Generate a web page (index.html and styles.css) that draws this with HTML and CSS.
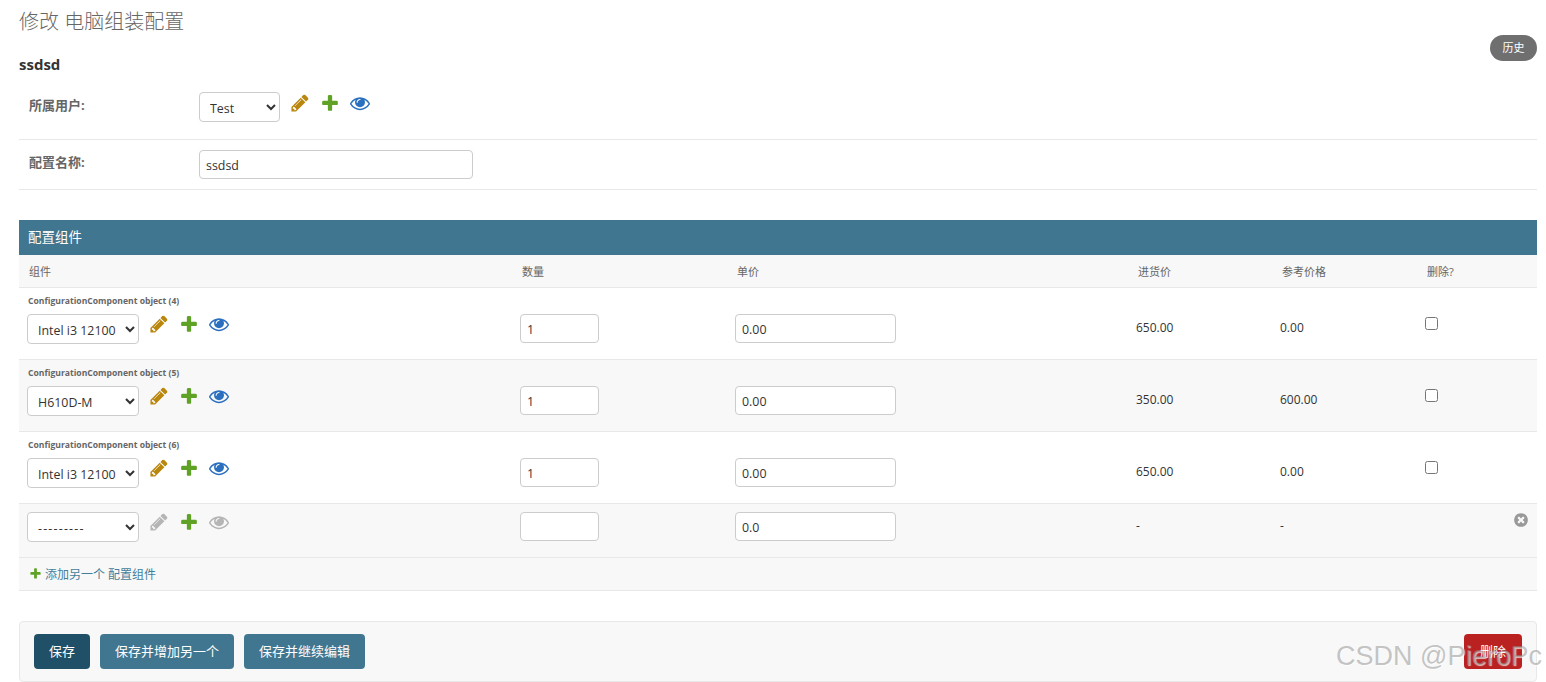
FILE: index.html
```html
<!DOCTYPE html>
<html lang="zh-CN">
<head>
<meta charset="utf-8">
<title>修改 电脑组装配置</title>
<link rel="stylesheet" href="styles.css">
</head>
<body>
<svg class="defs" width="0" height="0" aria-hidden="true">
  <symbol id="i-edit" viewBox="0 0 1792 1792"><path d="M491 1536l91-91-235-235-91 91v107h128v128h107zm523-928q0-22-22-22-10 0-17 7l-542 542q-7 7-7 17 0 22 22 22 10 0 17-7l542-542q7-7 7-17zm-54-192l416 416-832 832h-416v-416zm683 96q0 53-37 90l-166 166-416-416 166-165q36-38 90-38 53 0 91 38l235 234q37 39 37 91z"/></symbol>
  <symbol id="i-add" viewBox="0 0 1792 1792"><path d="M1600 796v192q0 40-28 68t-68 28h-416v416q0 40-28 68t-68 28h-192q-40 0-68-28t-28-68v-416h-416q-40 0-68-28t-28-68v-192q0-40 28-68t68-28h416v-416q0-40 28-68t68-28h192q40 0 68 28t28 68v416h416q40 0 68 28t28 68z"/></symbol>
  <symbol id="i-view" viewBox="0 0 1792 1792"><path d="M1664 960q-152-236-381-353 61 104 61 225 0 185-131.5 316.5t-316.5 131.5-316.5-131.5-131.5-316.5q0-121 61-225-229 117-381 353 133 205 333.5 326.5t434.5 121.5 434.5-121.5 333.5-326.5zm-720-384q0-20-14-34t-34-14q-125 0-214.5 89.5t-89.5 214.5q0 20 14 34t34 14 34-14 14-34q0-86 61-147t147-61q20 0 34-14t14-34zm848 384q0 34-20 69-140 230-376.5 368.5t-499.5 138.5-499.5-139-376.5-368q-20-35-20-69t20-69q140-229 376.5-368t499.5-139 499.5 139 376.5 368q20 35 20 69z"/></symbol>
  <symbol id="i-del" viewBox="0 0 1792 1792"><path d="M1277 1122q0-26-19-45l-181-181 181-181q19-19 19-45 0-27-19-46l-90-90q-19-19-46-19-26 0-45 19l-181 181-181-181q-19-19-45-19-27 0-46 19l-90 90q-19 19-19 46 0 26 19 45l181 181-181 181q-19 19-19 45 0 27 19 46l90 90q19 19 46 19 26 0 45-19l181-181 181 181q19 19 45 19 27 0 46-19l90-90q19-19 19-46zm387-226q0 209-103 385.5t-279.5 279.5-385.5 103-385.5-103-279.5-279.5-103-385.5 103-385.5 279.5-279.5 385.5-103 385.5 103 279.5 279.5 103 385.5z"/></symbol>
</svg>

<main class="content">
  <div class="title-row">
    <h1 class="page-title">修改 电脑组装配置</h1>
    <a class="history" href="#">历史</a>
  </div>
  <h2 class="object-name">ssdsd</h2>

  <section class="fields">
    <div class="form-row form-row-select">
      <label class="field-label">所属用户:</label>
      <div class="widget">
        <select class="control select-user"><option>Test</option></select>
        <div class="links">
          <svg class="icon edit"><use href="#i-edit"/></svg>
          <svg class="icon add"><use href="#i-add"/></svg>
          <svg class="icon view"><use href="#i-view"/></svg>
        </div>
      </div>
    </div>
    <div class="form-row">
      <label class="field-label">配置名称:</label>
      <input class="control input-name" type="text" value="ssdsd">
    </div>
  </section>

  <section class="inline-group">
    <h2 class="inline-title">配置组件</h2>
    <table class="grid">
      <colgroup>
        <col class="col-comp"><col class="col-qty"><col class="col-price"><col class="col-cost"><col class="col-ref"><col>
      </colgroup>
      <thead>
        <tr><th>组件</th><th>数量</th><th>单价</th><th>进货价</th><th>参考价格</th><th>删除?</th></tr>
      </thead>
      <tbody>
        <tr class="row">
          <td class="cell-comp">
            <div class="object-label">ConfigurationComponent object (4)</div>
            <div class="widget">
              <select class="control select-comp"><option>Intel i3 12100</option></select>
              <div class="links">
                <svg class="icon edit"><use href="#i-edit"/></svg>
                <svg class="icon add"><use href="#i-add"/></svg>
                <svg class="icon view"><use href="#i-view"/></svg>
              </div>
            </div>
          </td>
          <td class="cell-field"><input class="control input-qty" type="text" value="1"></td>
          <td class="cell-field"><input class="control input-price" type="text" value="0.00"></td>
          <td class="cell-num">650.00</td>
          <td class="cell-num">0.00</td>
          <td class="cell-check"><input class="check" type="checkbox"></td>
        </tr>
        <tr class="row alt">
          <td class="cell-comp">
            <div class="object-label">ConfigurationComponent object (5)</div>
            <div class="widget">
              <select class="control select-comp"><option>H610D-M</option></select>
              <div class="links">
                <svg class="icon edit"><use href="#i-edit"/></svg>
                <svg class="icon add"><use href="#i-add"/></svg>
                <svg class="icon view"><use href="#i-view"/></svg>
              </div>
            </div>
          </td>
          <td class="cell-field"><input class="control input-qty" type="text" value="1"></td>
          <td class="cell-field"><input class="control input-price" type="text" value="0.00"></td>
          <td class="cell-num">350.00</td>
          <td class="cell-num">600.00</td>
          <td class="cell-check"><input class="check" type="checkbox"></td>
        </tr>
        <tr class="row">
          <td class="cell-comp">
            <div class="object-label">ConfigurationComponent object (6)</div>
            <div class="widget">
              <select class="control select-comp"><option>Intel i3 12100</option></select>
              <div class="links">
                <svg class="icon edit"><use href="#i-edit"/></svg>
                <svg class="icon add"><use href="#i-add"/></svg>
                <svg class="icon view"><use href="#i-view"/></svg>
              </div>
            </div>
          </td>
          <td class="cell-field"><input class="control input-qty" type="text" value="1"></td>
          <td class="cell-field"><input class="control input-price" type="text" value="0.00"></td>
          <td class="cell-num">650.00</td>
          <td class="cell-num">0.00</td>
          <td class="cell-check"><input class="check" type="checkbox"></td>
        </tr>
        <tr class="row alt row-new">
          <td class="cell-comp">
            <div class="widget">
              <select class="control select-comp select-empty"><option>---------</option></select>
              <div class="links">
                <svg class="icon muted"><use href="#i-edit"/></svg>
                <svg class="icon add"><use href="#i-add"/></svg>
                <svg class="icon muted"><use href="#i-view"/></svg>
              </div>
            </div>
          </td>
          <td class="cell-field"><input class="control input-qty" type="text" value=""></td>
          <td class="cell-field"><input class="control input-price" type="text" value="0.0"></td>
          <td class="cell-num">-</td>
          <td class="cell-num">-</td>
          <td class="cell-remove"><svg class="remove"><use href="#i-del"/></svg></td>
        </tr>
      </tbody>
    </table>
    <div class="add-row">
      <svg class="add-icon"><use href="#i-add"/></svg>
      <a class="add-link" href="#">添加另一个 配置组件</a>
    </div>
  </section>

  <div class="submit-row">
    <a class="btn btn-default" href="#">保存</a>
    <a class="btn" href="#">保存并增加另一个</a>
    <a class="btn" href="#">保存并继续编辑</a>
    <a class="btn btn-delete" href="#">删除</a>
  </div>
</main>
<div class="watermark">CSDN @PieroPc</div>
</body>
</html>
```
FILE: styles.css
```css
* { box-sizing: border-box; }
html, body { margin: 0; height: 682px; overflow: hidden; }
body {
  position: relative;
  background: #fff;
  color: #333;
  font-family: "Open Sans", "Noto Sans CJK SC", sans-serif;
  font-size: 13px;
}
.defs { position: absolute; }
.content { padding: 0 9px 0 19px; }

.title-row { display: flex; justify-content: space-between; height: 61px; padding-top: 10px; }
.page-title { margin: 0; font-size: 20px; line-height: 24px; font-weight: 300; color: #666; }
.history {
  align-self: flex-end;
  width: 47px; height: 26px;
  border-radius: 13px;
  background: #6f6f6f;
  color: #fff;
  font-size: 11px;
  line-height: 26px;
  text-align: center;
  text-decoration: none;
}
.object-name { margin: -6px 0 0; height: 27px; font-size: 15px; line-height: 18px; font-weight: 700; color: #333; }

.fields { margin-bottom: 30px; }
.form-row { display: flex; align-items: flex-start; padding: 10px; border-bottom: 1px solid #e8e8e8; }
.form-row-select { padding-bottom: 17px; }
.form-row-select .field-label { padding-top: 1px; }
.field-label { width: 170px; font-size: 13px; line-height: 24px; font-weight: 700; color: #666; flex: none; }

.control {
  display: block;
  margin: 0;
  height: 30px;
  border: 1px solid #ccc;
  border-radius: 4px;
  background: #fff;
  color: #333;
  font-family: "Open Sans", "Noto Sans CJK SC", sans-serif;
  font-size: 12.4px;
}
input.control { height: 29px; padding: 1px 6px 0; }
select.control { padding: 2px 6px 0; }
.grid input.control { padding-top: 3px; }
.grid select.control { padding-top: 4px; }
.select-user { width: 81px; }
.select-comp { width: 112px; }
.select-empty { letter-spacing: 1.2px; }
.input-name { width: 274px; }
.input-qty { width: 79px; }
.input-price { width: 161px; }

.widget { display: flex; align-items: flex-start; }
.links { display: flex; gap: 10px; margin: 1px 0 0 10px; }
.grid .links { margin-top: 0; }
.icon { display: block; width: 20px; height: 20px; }
.edit { fill: #b9860e; }
.add { fill: #5fa225; }
.view { fill: #2b70bf; }
.muted { fill: #b5b5b5; }

.inline-title {
  margin: 0;
  height: 35px;
  padding: 0 9px;
  background: #417690;
  color: #fff;
  font-size: 13.5px;
  line-height: 35px;
  font-weight: 400;
}
.grid { width: 100%; table-layout: fixed; border-collapse: collapse; }
.col-comp { width: 493px; }
.col-qty { width: 215px; }
.col-price { width: 401px; }
.col-cost { width: 144px; }
.col-ref { width: 145px; }
.grid th {
  height: 32px;
  padding: 0 10px;
  background: #f8f8f8;
  border-bottom: 1px solid #e8e8e8;
  color: #666;
  font-size: 11px;
  font-weight: 400;
  text-align: left;
}
.grid td { padding: 0 8px; vertical-align: top; border-bottom: 1px solid #e8e8e8; }
.row { height: 72px; }
.row.alt { background: #f8f8f8; }
.row-new { height: 54px; }
.object-label { margin: 7px 0 7px 1px; font-size: 8.6px; line-height: 12px; font-weight: 700; color: #666; white-space: nowrap; }
.row-new .cell-comp .widget { margin-top: 8px; }
.grid .cell-field { padding-top: 26px; }
.grid .cell-num { padding-top: 32px; font-size: 12px; line-height: 16px; color: #333; }
.grid .cell-check { padding-top: 29px; }
.check { display: block; width: 13px; height: 13px; margin: 0; }
.grid .row-new .cell-field { padding-top: 8px; }
.grid .row-new .cell-num { padding-top: 14px; }
.remove { display: block; margin: 8px 0 0 auto; width: 16px; height: 16px; fill: #999; }

.add-row {
  display: flex;
  align-items: center;
  height: 33px;
  padding-left: 10px;
  background: #f8f8f8;
  border-bottom: 1px solid #e8e8e8;
}
.add-icon { width: 13px; height: 13px; margin-right: 3px; fill: #5fa225; }
.add-link { font-size: 12px; color: #447e9b; text-decoration: none; }

.submit-row {
  display: flex;
  gap: 10px;
  margin-top: 30px;
  height: 61px;
  padding: 12px 14px;
  background: #f8f8f8;
  border: 1px solid #e8e8e8;
  border-radius: 4px;
}
.btn {
  height: 35px;
  padding: 0 15px;
  border-radius: 4px;
  background: #417690;
  color: #fff;
  font-size: 13px;
  line-height: 35px;
  text-decoration: none;
  white-space: nowrap;
}
.btn-default { background: #205067; }
.btn-delete { margin-left: auto; padding: 0 16px; background: #ba2121; }

.watermark {
  position: absolute;
  left: 1336px;
  top: 639px;
  font-family: "Liberation Sans", sans-serif;
  font-size: 27px;
  line-height: 34px;
  white-space: nowrap;
  color: rgba(140, 140, 140, 0.5);
  text-shadow: 1px 1px 1px rgba(255, 255, 255, 0.7);
}
```
